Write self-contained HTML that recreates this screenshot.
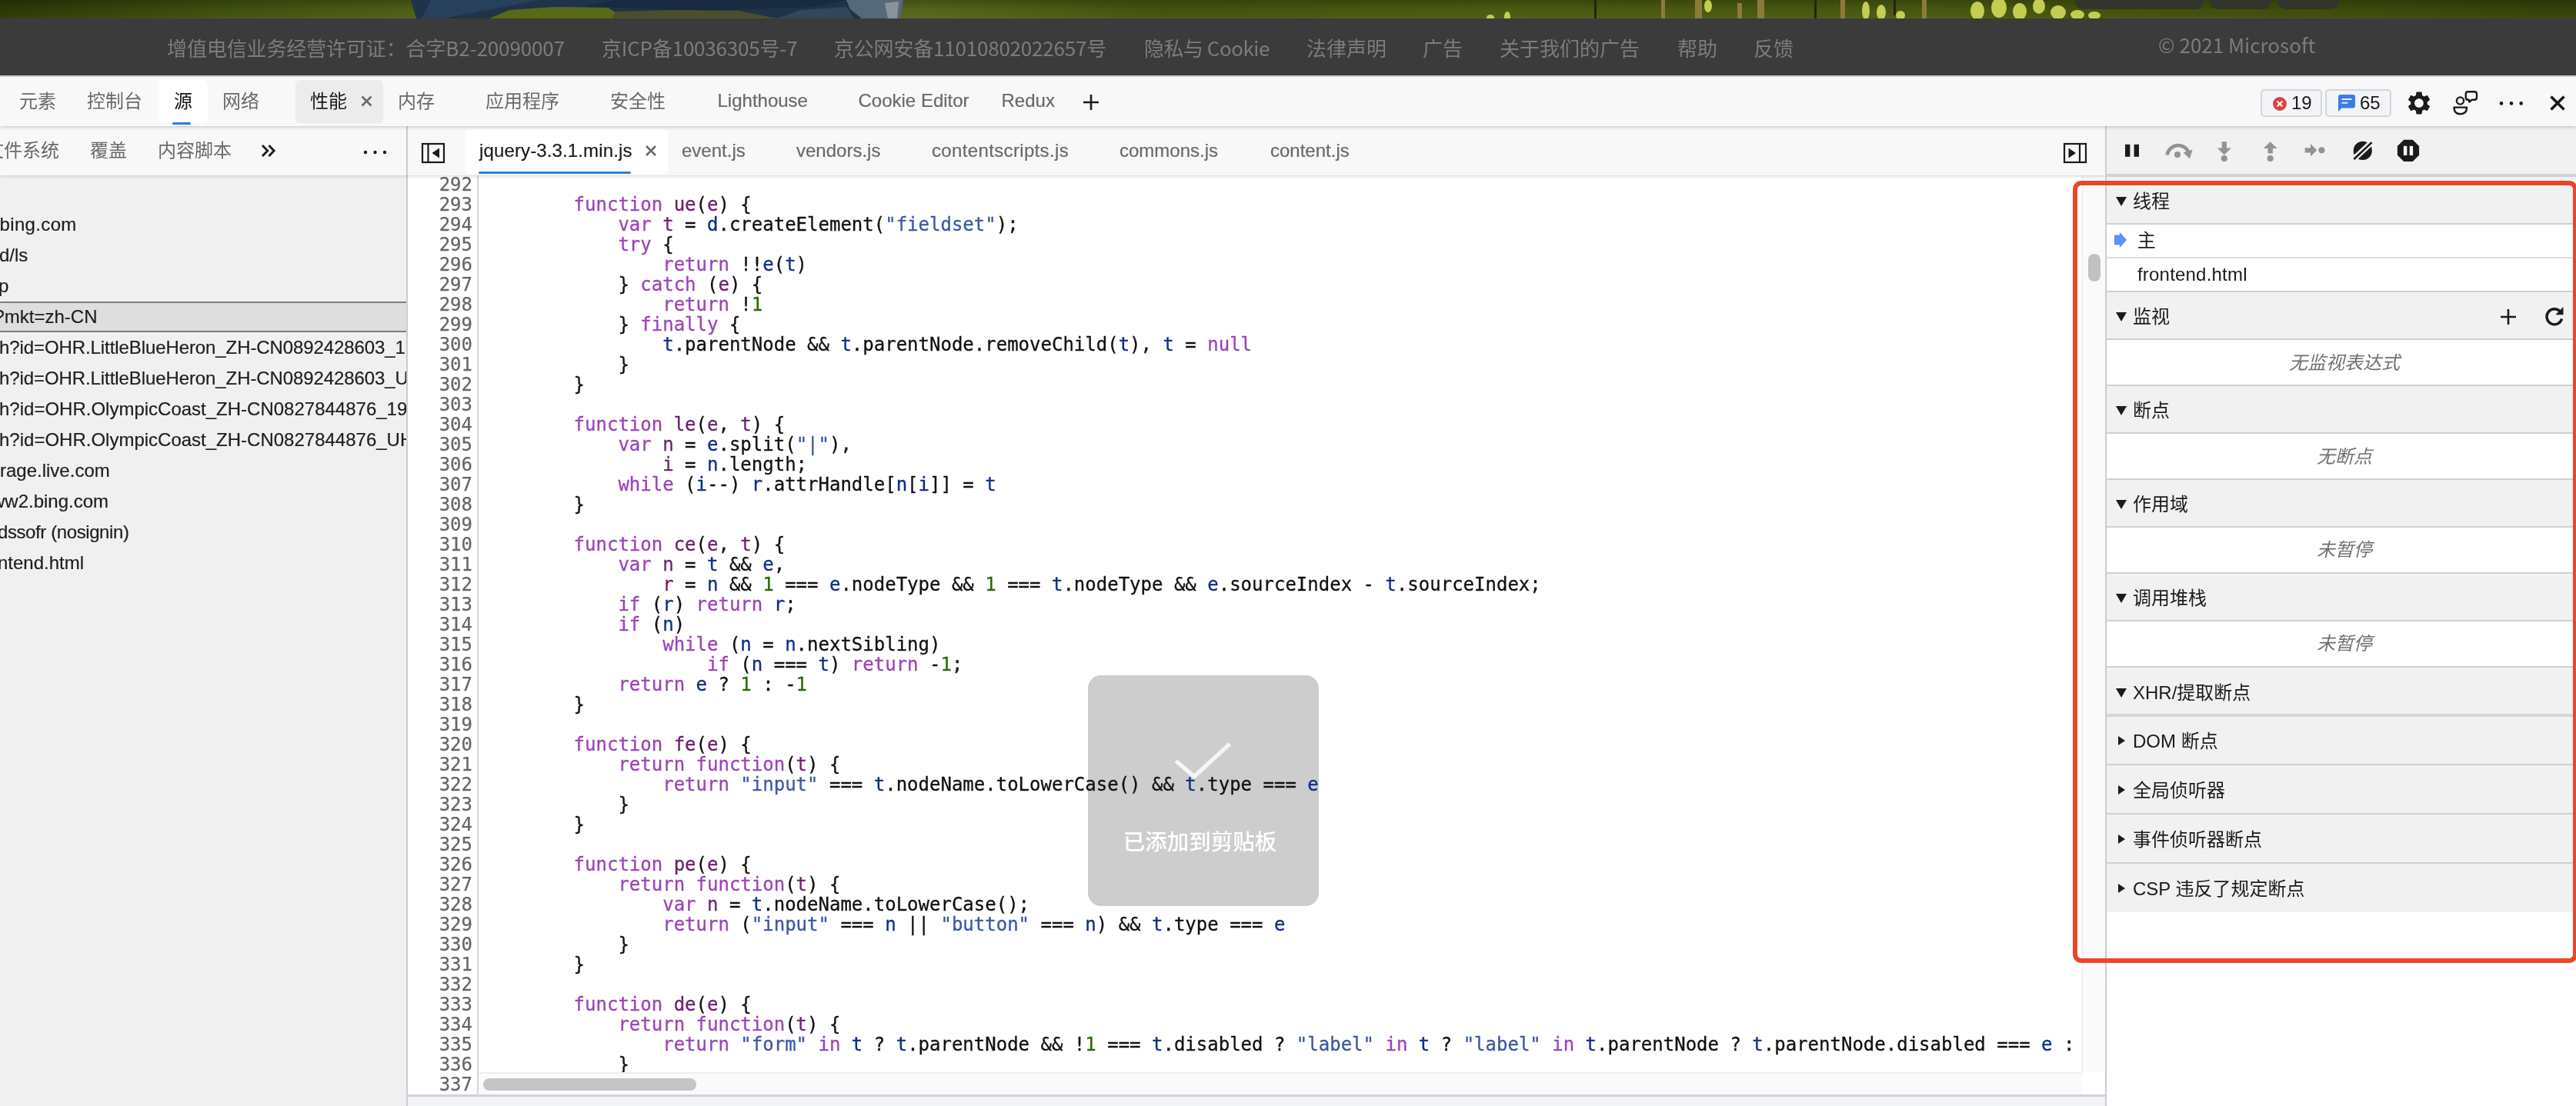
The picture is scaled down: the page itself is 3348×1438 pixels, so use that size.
<!DOCTYPE html>
<html lang="zh-CN">
<head>
<meta charset="utf-8">
<title>DevTools - 源</title>
<style>
*{box-sizing:border-box;margin:0;padding:0}
html,body{width:3348px;height:1438px;overflow:hidden;background:#fff}
body{position:relative;font-family:"Liberation Sans","Noto Sans CJK SC",sans-serif;font-size:24px;color:#1b1b1b}
#root{position:absolute;left:0;top:0;width:3348px;height:1438px;will-change:transform}
.abs{position:absolute}
.t{position:absolute;white-space:nowrap}
i{font-style:normal}

/* page behind devtools */
#strip{left:0;top:0;width:3348px;height:24px;overflow:hidden}
#footer{left:0;top:24px;width:3348px;height:74px;background:#3b3b3b;font-family:"Noto Sans CJK SC","Liberation Sans",sans-serif;font-size:26px;color:#7c7c7c}
#footer .t{top:0;line-height:76px}
#dtborder{left:0;top:98px;width:3348px;height:2px;background:#d3d6dc}

/* main toolbar */
#maintabs{left:0;top:100px;width:3348px;height:64px;background:#f8f8f8;box-shadow:0 1px 5px rgba(0,0,0,.22);z-index:5}
#maintabs .t{top:0;line-height:64px;color:#6a6a6a}
#maintabs .l,#row2 .l{line-height:62px;-webkit-text-stroke:.2px}
#tab-src{left:206px;top:4px;width:64px;height:56px;background:#fff;border-radius:6px}
#tab-src-ul{left:224px;top:59px;width:24px;height:3px;background:#2f7de1;border-radius:2px}
#tab-perf{left:384px;top:4px;width:114px;height:56px;background:#ececec;border-radius:6px}
.badge{top:16px;height:36px;border:2px solid #d3d6dd;border-radius:5px;background:#f3f4f7}

/* second row */
#row2{left:0;top:164px;width:3348px;height:64px;z-index:4}
#row2bg{left:0;top:0;width:2736px;height:64px;background:#f8f8f8;box-shadow:0 1px 4px rgba(0,0,0,.18)}
#row2 .t{top:0;line-height:64px;color:#6a6a6a}
#filetab{left:604px;top:4px;width:264px;height:58px;background:#fff;border-radius:6px}
#filetab-ul{left:622px;top:59px;width:198px;height:3px;background:#2f7de1;border-radius:2px}
#dbgbar{left:2738px;top:0;width:610px;height:66px;background:#f1f1f1;border-bottom:4px solid #cfd2d9}
.vdiv{width:2px;background:#c9ccd3}

/* left navigator */
#nav{left:0;top:228px;width:528px;height:1210px;background:#f0f0f0;overflow:hidden}
#nav .t{line-height:40px;color:#1e1e1e;margin-top:-1px;-webkit-text-stroke:.2px}
#navsel{left:0;top:164px;width:529px;height:40px;background:#dedede;border-top:2px solid #7d7d7d;border-bottom:2px solid #7d7d7d}

/* editor */
#editor{left:530px;top:228px;width:2176px;height:1195px;background:#fff;overflow:hidden}
#gutter{-webkit-text-stroke:.25px;left:0;top:-1.3px;width:92px;height:1200px;border-right:2px solid #d5d8dd;background:#fff;font-family:"DejaVu Sans Mono","Liberation Mono",monospace;font-size:24px;color:#666;text-align:right;padding-right:6px}
.gl,.cl{height:26px;line-height:26px;white-space:pre}
#code{left:100px;top:-1.3px;-webkit-text-stroke:.3px;font-family:"DejaVu Sans Mono","Liberation Mono",monospace;font-size:24px;color:#111;z-index:3}
.k{color:#9b45b8}.d{color:#6d1f6e}.v{color:#0e2e87}.s{color:#3c58a5}.n{color:#2b6a06}
#toast{left:884px;top:650px;width:300px;height:300px;border-radius:17px;background:#cdcdcd;z-index:2}
#toast-t{left:879.6px;top:841.5px;width:300px;text-align:center;font-family:"Noto Sans CJK SC",sans-serif;font-size:28.5px;font-weight:500;line-height:46px;color:#fff;z-index:4}
#hscroll{left:92px;top:1166px;width:2084px;height:29px;background:#fafafa;border-top:2px solid #eee;z-index:6}
#hthumb{left:6px;top:6px;width:277px;height:16px;border-radius:8px;background:#c5c5c5}
#vscroll{left:2706px;top:228px;width:31px;height:1166px;background:#fafafa;border-left:1px solid #e8e8e8}
#vthumb{left:7px;top:102px;width:16px;height:36px;border-radius:8px;background:#c1c1c1}
#edbottom{left:530px;top:1423px;width:2207px;height:15px;background:#f3f4f6;border-top:3px solid #d0d3da}

/* right debugger sidebar */
#side{left:2738px;top:230px;width:610px;height:1208px;background:#fff;overflow:hidden}
.srow{position:absolute;left:0;width:610px;overflow:hidden}
.tri-d{position:absolute;left:12px;width:0;height:0;border-left:7.5px solid transparent;border-right:7.5px solid transparent;border-top:12px solid #1b1b1b}
.tri-r{position:absolute;left:15px;width:0;height:0;border-top:6.5px solid transparent;border-bottom:6.5px solid transparent;border-left:9.5px solid #1b1b1b}
.empty{position:absolute;left:0;width:618px;text-align:center;font-style:italic;color:#707070;margin-top:-.8px}
#redbox{left:2694px;top:235px;width:656px;height:1017px;border:6px solid #ec4628;border-radius:11px;z-index:20}
</style>
</head>
<body>
<div id="root">

<!-- background page strip (bird photo) -->
<div id="strip" class="abs">
<svg width="3348" height="24" viewBox="0 0 3348 24">
<defs>
<linearGradient id="g1" x1="0" x2="1"><stop offset="0" stop-color="#2c3907"/><stop offset=".09" stop-color="#41520f"/><stop offset=".16" stop-color="#4e6016"/><stop offset=".36" stop-color="#55671a"/><stop offset=".45" stop-color="#44540d"/><stop offset=".58" stop-color="#4c5c11"/><stop offset=".75" stop-color="#495910"/><stop offset=".9" stop-color="#3f4e0c"/><stop offset="1" stop-color="#35430a"/></linearGradient>
<linearGradient id="g2" x1="0" y1="0" x2="0" y2="1"><stop offset="0" stop-color="#000" stop-opacity=".22"/><stop offset=".6" stop-color="#000" stop-opacity="0"/><stop offset="1" stop-color="#fff" stop-opacity=".04"/></linearGradient>
</defs>
<rect width="3348" height="24" fill="url(#g1)"/>
<rect width="3348" height="24" fill="url(#g2)"/>
<polygon points="534,0 1174,0 1170,24 541,24" fill="#1f3349"/>
<polygon points="560,0 700,0 640,12 575,24 548,24" fill="#27405c"/>
<polygon points="800,0 1100,0 1060,9 900,14 760,8" fill="#182a3d"/>
<polygon points="636,24 662,13 720,9 790,10 800,16 796,24" fill="#566a18"/>
<polygon points="796,24 800,15 880,13 960,14 1010,24" fill="#4a4f2b"/>
<polygon points="1010,24 1040,13 1100,9 1110,24" fill="#33475a"/>
<polygon points="1100,0 1174,0 1170,24 1120,24 1105,12" fill="#56697a"/>
<polygon points="1150,4 1168,2 1166,24 1154,24" fill="#8a9399"/>
<g fill="#8d7a3a"><rect x="2159" y="0" width="5" height="24"/><rect x="2203" y="0" width="9" height="24"/><rect x="2258" y="4" width="6" height="20"/><rect x="2284" y="0" width="9" height="24"/><rect x="2392" y="0" width="6" height="24"/><rect x="2498" y="0" width="6" height="24"/></g>
<g fill="#23260c"><rect x="2072" y="0" width="3" height="24"/><rect x="2358" y="0" width="3" height="24"/><rect x="2461" y="0" width="3" height="20"/></g>
<g fill="#c3cd52"><ellipse cx="1937" cy="23" rx="5" ry="4"/><ellipse cx="1959" cy="22" rx="4" ry="7"/><ellipse cx="2220" cy="8" rx="5" ry="8"/><ellipse cx="2425" cy="14" rx="5" ry="12"/><ellipse cx="2445" cy="16" rx="6" ry="10"/><ellipse cx="2470" cy="20" rx="6" ry="6"/>
<ellipse cx="2570" cy="14" rx="9" ry="12"/><ellipse cx="2598" cy="10" rx="10" ry="13"/><ellipse cx="2625" cy="15" rx="9" ry="11"/><ellipse cx="2650" cy="8" rx="8" ry="10"/><ellipse cx="2675" cy="16" rx="10" ry="9"/><ellipse cx="2700" cy="19" rx="9" ry="6"/><ellipse cx="2722" cy="20" rx="8" ry="5"/></g>
<rect x="2697" y="-12" width="167" height="24" rx="10" fill="#33342b"/>
<rect x="2872" y="-12" width="80" height="24" rx="10" fill="#33342b"/>
<rect x="2960" y="-12" width="80" height="24" rx="10" fill="#33342b"/>
</svg>
</div>
<div id="footer" class="abs">
<span class="t" style="left:217px;letter-spacing:-.12px">增值电信业务经营许可证：合字B2-20090007</span>
<span class="t" style="left:782px;letter-spacing:-.2px">京ICP备10036305号-7</span>
<span class="t" style="left:1084px;letter-spacing:-.2px">京公网安备11010802022657号</span>
<span class="t" style="left:1487px;letter-spacing:-.5px">隐私与 Cookie</span>
<span class="t" style="left:1698px">法律声明</span>
<span class="t" style="left:1849px">广告</span>
<span class="t" style="left:1949px">关于我们的广告</span>
<span class="t" style="left:2180px">帮助</span>
<span class="t" style="left:2279px">反馈</span>
<span class="t" style="left:2805px;line-height:68px">© 2021 Microsoft</span>
</div>
<div id="dtborder" class="abs"></div>

<!-- DevTools main tab bar -->
<div id="maintabs" class="abs">
<div id="tab-src" class="abs"></div><div id="tab-src-ul" class="abs"></div>
<div id="tab-perf" class="abs"></div>
<span class="t" style="left:25px">元素</span>
<span class="t" style="left:113px">控制台</span>
<span class="t" style="left:226px;color:#111">源</span>
<span class="t" style="left:289px">网络</span>
<span class="t" style="left:403px;color:#1b1b1b">性能</span>
<svg class="abs" style="left:469px;top:24px" width="15" height="15" viewBox="0 0 15 15"><path d="M1.5 1.5 L13.5 13.5 M13.5 1.5 L1.5 13.5" stroke="#6a6a6a" stroke-width="2.6" fill="none"/></svg>
<span class="t" style="left:517px">内存</span>
<span class="t" style="left:631px">应用程序</span>
<span class="t" style="left:793px">安全性</span>
<span class="t l" style="left:932.5px">Lighthouse</span>
<span class="t l" style="left:1115.5px">Cookie Editor</span>
<span class="t l" style="left:1301.5px">Redux</span>
<svg class="abs" style="left:1407px;top:22px" width="22" height="22" viewBox="0 0 22 22"><path d="M11 1 V21 M1 11 H21" stroke="#1b1b1b" stroke-width="2.6" fill="none"/></svg>

<div class="abs badge" style="left:2938px;width:80px"></div>
<svg class="abs" style="left:2954px;top:26px" width="18" height="18" viewBox="0 0 18 18"><circle cx="9" cy="9" r="9" fill="#d9444c"/><path d="M5.6 5.6 L12.4 12.4 M12.4 5.6 L5.6 12.4" stroke="#fff" stroke-width="2" fill="none"/></svg>
<span class="t" style="left:2978px;color:#1b1b1b;line-height:68px">19</span>
<div class="abs badge" style="left:3022px;width:86px"></div>
<svg class="abs" style="left:3039px;top:23px" width="22" height="22" viewBox="0 0 22 22"><path d="M3 0 H19 Q22 0 22 3 V14.5 Q22 17.5 19 17.5 H4.5 L0 22 V3 Q0 0 3 0 Z" fill="#3b7de2"/><path d="M4.5 6 H17.5 M4.5 10.8 H12.5" stroke="#dfeafc" stroke-width="2" fill="none"/></svg>
<span class="t" style="left:3067px;color:#1b1b1b;line-height:68px">65</span>
<!-- gear -->
<svg class="abs" style="left:3126px;top:16.2px" width="36" height="36" viewBox="0 0 24 24"><path fill="#1b1b1b" d="M19.14,12.94c0.04-0.3,0.06-0.61,0.06-0.94c0-0.32-0.02-0.64-0.07-0.94l2.03-1.58c0.18-0.14,0.23-0.41,0.12-0.61 l-1.92-3.32c-0.12-0.22-0.37-0.29-0.59-0.22l-2.39,0.96c-0.5-0.38-1.03-0.7-1.62-0.94L14.4,2.81c-0.04-0.24-0.24-0.41-0.48-0.41 h-3.84c-0.24,0-0.43,0.17-0.47,0.41L9.25,5.35C8.66,5.59,8.12,5.92,7.63,6.29L5.24,5.33c-0.22-0.08-0.47,0-0.59,0.22L2.74,8.87 C2.62,9.08,2.66,9.34,2.86,9.48l2.03,1.58C4.84,11.36,4.8,11.69,4.8,12s0.02,0.64,0.07,0.94l-2.03,1.58 c-0.18,0.14-0.23,0.41-0.12,0.61l1.92,3.32c0.12,0.22,0.37,0.29,0.59,0.22l2.39-0.96c0.5,0.38,1.03,0.7,1.62,0.94l0.36,2.54 c0.05,0.24,0.24,0.41,0.48,0.41h3.84c0.24,0,0.44-0.17,0.47-0.41l0.36-2.54c0.59-0.24,1.13-0.56,1.62-0.94l2.39,0.96 c0.22,0.08,0.47,0,0.59-0.22l1.92-3.32c0.12-0.22,0.07-0.47-0.12-0.61L19.14,12.94z M12,15.9c-2.15,0-3.9-1.75-3.9-3.9 s1.75-3.9,3.9-3.9s3.9,1.75,3.9,3.9S14.15,15.9,12,15.9z"/></svg>
<!-- feedback -->
<svg class="abs" style="left:3186px;top:16px" width="36" height="36" viewBox="0 0 36 36" fill="none" stroke="#1b1b1b" stroke-width="2.4" stroke-linejoin="round"><circle cx="11.5" cy="15" r="4.6"/><path d="M3.5 23.6 H20.1 Q20.1 32.3 11.8 32.3 Q3.5 32.3 3.5 23.6 Z"/><path d="M21.5 3.2 H30 Q33 3.2 33 6.2 V10.8 Q33 13.8 30 13.8 H26.5 L23.5 16.6 L22.8 13.8 H21.5 Q18.8 13.8 18.8 10.8 V6.2 Q18.8 3.2 21.5 3.2 Z"/></svg>
<svg class="abs" style="left:3246px;top:30px" width="36" height="10" viewBox="0 0 36 10"><circle cx="5" cy="4.4" r="2.3" fill="#1b1b1b"/><circle cx="18" cy="4.4" r="2.3" fill="#1b1b1b"/><circle cx="30.7" cy="4.4" r="2.3" fill="#1b1b1b"/></svg>
<svg class="abs" style="left:3313px;top:23px" width="22" height="22" viewBox="0 0 22 22"><path d="M2.5 2.5 L19.5 19.5 M19.5 2.5 L2.5 19.5" stroke="#1b1b1b" stroke-width="3.6" fill="none"/></svg>
</div>

<!-- second row: navigator tabs / file tabs / debugger toolbar -->
<div id="row2" class="abs">
<div id="row2bg" class="abs"></div>
<span class="t" style="left:-19px">文件系统</span>
<span class="t" style="left:117px">覆盖</span>
<span class="t" style="left:205px">内容脚本</span>
<svg class="abs" style="left:339px;top:23px" width="22" height="20" viewBox="0 0 22 20"><path d="M2 2 L8.8 9 L2 16 M10.4 2 L17.2 9 L10.4 16" stroke="#1b1b1b" stroke-width="2.8" fill="none"/></svg>
<svg class="abs" style="left:470px;top:29px" width="36" height="10" viewBox="0 0 36 10"><circle cx="5" cy="5" r="2.2" fill="#1b1b1b"/><circle cx="17.5" cy="5" r="2.2" fill="#1b1b1b"/><circle cx="30" cy="5" r="2.2" fill="#1b1b1b"/></svg>
<div class="abs vdiv" style="left:528px;top:0;height:64px"></div>
<svg class="abs" style="left:547px;top:21px" width="32" height="28" viewBox="0 0 32 28"><rect x="2" y="2" width="28" height="24" fill="none" stroke="#1b1b1b" stroke-width="2.2"/><path d="M9.5 2 V26" stroke="#1b1b1b" stroke-width="2.2"/><path d="M24 7.5 V20.5 L14.5 14 Z" fill="#1b1b1b"/></svg>
<div id="filetab" class="abs"></div><div id="filetab-ul" class="abs"></div>
<span class="t l" style="left:623px;color:#1b1b1b;letter-spacing:.13px">jquery-3.3.1.min.js</span>
<svg class="abs" style="left:838px;top:24px" width="16" height="16" viewBox="0 0 16 16"><path d="M2 2 L14 14 M14 2 L2 14" stroke="#6a6a6a" stroke-width="2.6" fill="none"/></svg>
<span class="t l" style="left:886px">event.js</span>
<span class="t l" style="left:1035px">vendors.js</span>
<span class="t l" style="left:1211px;letter-spacing:.35px">contentscripts.js</span>
<span class="t l" style="left:1455px">commons.js</span>
<span class="t l" style="left:1651px">content.js</span>
<svg class="abs" style="left:2681px;top:21px" width="32" height="28" viewBox="0 0 32 28"><rect x="2" y="2" width="28" height="24" fill="none" stroke="#1b1b1b" stroke-width="2.2"/><path d="M22 2 V26" stroke="#1b1b1b" stroke-width="2.2"/><path d="M7.5 7.5 V20.5 L17 14 Z" fill="#1b1b1b"/></svg>
<div class="abs vdiv" style="left:2736px;top:0;height:64px"></div>
<div id="dbgbar" class="abs">
<!-- coordinates relative to x=2738,y=164 -->
<svg class="abs" style="left:0;top:0" width="610" height="62" viewBox="2738 164 610 62">
<rect x="2762" y="187.8" width="6.4" height="16" fill="#1b1b1b"/><rect x="2773.6" y="187.8" width="6.4" height="16" fill="#1b1b1b"/>
<g fill="#939393">
<path d="M2816.6 201.5 A14.5 14.5 0 0 1 2844.2 197.6" fill="none" stroke="#939393" stroke-width="4.6"/>
<path d="M2837.5 198.5 L2849.6 194.5 L2846 206.5 Z"/>
<circle cx="2830" cy="201" r="4.1"/>
<path d="M2887.7 184.2 H2894 V192.5 H2899.8 L2890.8 201.4 L2881.8 192.5 H2887.7 Z"/><circle cx="2890.8" cy="206" r="4.1"/>
<path d="M2950.7 184.2 L2959.7 193 H2953.9 V199.4 H2947.5 V193 H2941.7 Z"/><circle cx="2950.7" cy="206" r="4.1"/>
<path d="M2995.7 192.2 H3003 V187 L3011.3 195.3 L3003 203.6 V198.4 H2995.7 Z"/><circle cx="3017.4" cy="195.3" r="4.1"/>
</g>
<circle cx="3070.8" cy="195.9" r="12.1" fill="#1b1b1b"/>
<path d="M3059.3 206.7 L3082.3 185.1" stroke="#f1f1f1" stroke-width="7.4"/>
<path d="M3059.3 207 L3082.6 185.1" stroke="#1b1b1b" stroke-width="2.6"/>
<path d="M3124.2 181.8 H3135.8 L3144.1 190.1 V201.7 L3135.8 210 H3124.2 L3115.9 201.7 V190.1 Z" fill="#1b1b1b"/>
<rect x="3123.9" y="189.8" width="4.4" height="12.2" fill="#fff"/><rect x="3131.7" y="189.8" width="4.4" height="12.2" fill="#fff"/>
</svg>
</div>
</div>

<!-- left navigator tree -->
<div id="nav" class="abs">
<div id="navsel" class="abs"></div>
<span class="t" style="left:-.5px;top:45px;letter-spacing:.35px">bing.com</span>
<span class="t" style="left:-1px;top:85px">d/ls</span>
<span class="t" style="left:-2px;top:125px">p</span>
<span class="t" style="left:-7.5px;top:165px">?mkt=zh-CN</span>
<span class="t" style="left:-1px;top:205px;letter-spacing:-.09px">h?id=OHR.LittleBlueHeron_ZH-CN0892428603_1920x1080.jpg</span>
<span class="t" style="left:-1px;top:245px;letter-spacing:-.09px">h?id=OHR.LittleBlueHeron_ZH-CN0892428603_UHD.jpg</span>
<span class="t" style="left:-1px;top:285px">h?id=OHR.OlympicCoast_ZH-CN0827844876_1920x1080.jpg</span>
<span class="t" style="left:-1px;top:325px">h?id=OHR.OlympicCoast_ZH-CN0827844876_UHD.jpg</span>
<span class="t" style="left:0px;top:365px">rage.live.com</span>
<span class="t" style="left:-11px;top:405px">ww2.bing.com</span>
<span class="t" style="left:-8px;top:445px;letter-spacing:-.4px">idssofr (nosignin)</span>
<span class="t" style="left:-3px;top:485px">ntend.html</span>
</div>
<div class="abs vdiv" style="left:528px;top:228px;height:1210px"></div>

<!-- source editor -->
<div id="editor" class="abs">
<div id="gutter" class="abs">
<div class="gl">292</div>
<div class="gl">293</div>
<div class="gl">294</div>
<div class="gl">295</div>
<div class="gl">296</div>
<div class="gl">297</div>
<div class="gl">298</div>
<div class="gl">299</div>
<div class="gl">300</div>
<div class="gl">301</div>
<div class="gl">302</div>
<div class="gl">303</div>
<div class="gl">304</div>
<div class="gl">305</div>
<div class="gl">306</div>
<div class="gl">307</div>
<div class="gl">308</div>
<div class="gl">309</div>
<div class="gl">310</div>
<div class="gl">311</div>
<div class="gl">312</div>
<div class="gl">313</div>
<div class="gl">314</div>
<div class="gl">315</div>
<div class="gl">316</div>
<div class="gl">317</div>
<div class="gl">318</div>
<div class="gl">319</div>
<div class="gl">320</div>
<div class="gl">321</div>
<div class="gl">322</div>
<div class="gl">323</div>
<div class="gl">324</div>
<div class="gl">325</div>
<div class="gl">326</div>
<div class="gl">327</div>
<div class="gl">328</div>
<div class="gl">329</div>
<div class="gl">330</div>
<div class="gl">331</div>
<div class="gl">332</div>
<div class="gl">333</div>
<div class="gl">334</div>
<div class="gl">335</div>
<div class="gl">336</div>
<div class="gl">337</div>
</div>
<div id="toast" class="abs"></div>
<div id="code" class="abs">
<div class="cl">&nbsp;</div>
<div class="cl">        <i class="k">function</i> <i class="d">ue</i>(<i class="d">e</i>) {</div>
<div class="cl">            <i class="k">var</i> <i class="d">t</i> = <i class="v">d</i>.createElement(<i class="s">"fieldset"</i>);</div>
<div class="cl">            <i class="k">try</i> {</div>
<div class="cl">                <i class="k">return</i> !!<i class="v">e</i>(<i class="v">t</i>)</div>
<div class="cl">            } <i class="k">catch</i> (<i class="d">e</i>) {</div>
<div class="cl">                <i class="k">return</i> !<i class="n">1</i></div>
<div class="cl">            } <i class="k">finally</i> {</div>
<div class="cl">                <i class="v">t</i>.parentNode &amp;&amp; <i class="v">t</i>.parentNode.removeChild(<i class="v">t</i>), <i class="v">t</i> = <i class="k">null</i></div>
<div class="cl">            }</div>
<div class="cl">        }</div>
<div class="cl">&nbsp;</div>
<div class="cl">        <i class="k">function</i> <i class="d">le</i>(<i class="d">e</i>, <i class="d">t</i>) {</div>
<div class="cl">            <i class="k">var</i> <i class="d">n</i> = <i class="v">e</i>.split(<i class="s">"|"</i>),</div>
<div class="cl">                <i class="d">i</i> = <i class="v">n</i>.length;</div>
<div class="cl">            <i class="k">while</i> (<i class="v">i</i>--) <i class="v">r</i>.attrHandle[<i class="v">n</i>[<i class="v">i</i>]] = <i class="v">t</i></div>
<div class="cl">        }</div>
<div class="cl">&nbsp;</div>
<div class="cl">        <i class="k">function</i> <i class="d">ce</i>(<i class="d">e</i>, <i class="d">t</i>) {</div>
<div class="cl">            <i class="k">var</i> <i class="d">n</i> = <i class="v">t</i> &amp;&amp; <i class="v">e</i>,</div>
<div class="cl">                <i class="d">r</i> = <i class="v">n</i> &amp;&amp; <i class="n">1</i> === <i class="v">e</i>.nodeType &amp;&amp; <i class="n">1</i> === <i class="v">t</i>.nodeType &amp;&amp; <i class="v">e</i>.sourceIndex - <i class="v">t</i>.sourceIndex;</div>
<div class="cl">            <i class="k">if</i> (<i class="v">r</i>) <i class="k">return</i> <i class="v">r</i>;</div>
<div class="cl">            <i class="k">if</i> (<i class="v">n</i>)</div>
<div class="cl">                <i class="k">while</i> (<i class="v">n</i> = <i class="v">n</i>.nextSibling)</div>
<div class="cl">                    <i class="k">if</i> (<i class="v">n</i> === <i class="v">t</i>) <i class="k">return</i> -<i class="n">1</i>;</div>
<div class="cl">            <i class="k">return</i> <i class="v">e</i> ? <i class="n">1</i> : -<i class="n">1</i></div>
<div class="cl">        }</div>
<div class="cl">&nbsp;</div>
<div class="cl">        <i class="k">function</i> <i class="d">fe</i>(<i class="d">e</i>) {</div>
<div class="cl">            <i class="k">return</i> <i class="k">function</i>(<i class="d">t</i>) {</div>
<div class="cl">                <i class="k">return</i> <i class="s">"input"</i> === <i class="v">t</i>.nodeName.toLowerCase() &amp;&amp; <i class="v">t</i>.type === <i class="v">e</i></div>
<div class="cl">            }</div>
<div class="cl">        }</div>
<div class="cl">&nbsp;</div>
<div class="cl">        <i class="k">function</i> <i class="d">pe</i>(<i class="d">e</i>) {</div>
<div class="cl">            <i class="k">return</i> <i class="k">function</i>(<i class="d">t</i>) {</div>
<div class="cl">                <i class="k">var</i> <i class="d">n</i> = <i class="v">t</i>.nodeName.toLowerCase();</div>
<div class="cl">                <i class="k">return</i> (<i class="s">"input"</i> === <i class="v">n</i> || <i class="s">"button"</i> === <i class="v">n</i>) &amp;&amp; <i class="v">t</i>.type === <i class="v">e</i></div>
<div class="cl">            }</div>
<div class="cl">        }</div>
<div class="cl">&nbsp;</div>
<div class="cl">        <i class="k">function</i> <i class="d">de</i>(<i class="d">e</i>) {</div>
<div class="cl">            <i class="k">return</i> <i class="k">function</i>(<i class="d">t</i>) {</div>
<div class="cl">                <i class="k">return</i> <i class="s">"form"</i> <i class="k">in</i> <i class="v">t</i> ? <i class="v">t</i>.parentNode &amp;&amp; !<i class="n">1</i> === <i class="v">t</i>.disabled ? <i class="s">"label"</i> <i class="k">in</i> <i class="v">t</i> ? <i class="s">"label"</i> <i class="k">in</i> <i class="v">t</i>.parentNode ? <i class="v">t</i>.parentNode.disabled === <i class="v">e</i> : <i class="v">t</i>.disabled === <i class="v">e</i> : <i class="v">t</i>.isDisabled === <i class="v">e</i> || <i class="v">t</i>.isDisabled !== !<i class="v">e</i> &amp;&amp; <i class="v">ie</i>(<i class="v">t</i>) === <i class="v">e</i></div>
<div class="cl">            }</div>
<div class="cl">&nbsp;</div>
</div>
<svg class="abs" style="left:984px;top:726.3px;z-index:4" width="100" height="70" viewBox="1514 953 100 70"><path d="M1528.3 988.2 L1552 1008.6 L1598.4 966.3" stroke="#f5f5f5" stroke-width="5.4" fill="none"/></svg>
<div id="toast-t" class="abs">已添加到剪贴板</div>
<div id="hscroll" class="abs"><div id="hthumb" class="abs"></div></div>
</div>
<div id="vscroll" class="abs"><div id="vthumb" class="abs"></div></div>
<div id="edbottom" class="abs"></div>
<div class="abs vdiv" style="left:2736px;top:228px;height:1210px;z-index:7"></div>

<!-- debugger sidebar -->
<div id="side" class="abs">
<div class="srow" style="top:0px;height:62px;background:#f1f1f1;border-bottom:2px solid #cdd0d7"><div class="tri-d" style="top:26.0px"></div><span class="t" style="left:34px;top:2.2px;line-height:60px">线程</span></div>
<div class="srow" style="top:62px;height:44px;background:#fff;border-bottom:2px solid #dcdee3"><svg class="abs" style="left:10px;top:10.3px" width="17" height="20" viewBox="0 0 17 20"><path d="M0 3.6 H7 V0 L16.2 10 L7 20 V16.4 H0 Z" fill="#5b93f0"/></svg><span class="t" style="left:39.7px;top:-9.0px;line-height:60px">主</span></div>
<div class="srow" style="top:106px;height:44px;background:#fff;border-bottom:2px solid #cdd0d7"><span class="t" style="left:40px;top:-9.3px;line-height:60px;letter-spacing:.2px">frontend.html</span></div>
<div class="srow" style="top:150px;height:62px;background:#f1f1f1;border-bottom:2px solid #cdd0d7"><div class="tri-d" style="top:25.7px"></div><span class="t" style="left:34px;top:1.9px;line-height:60px">监视</span><svg class="abs" style="left:512px;top:21.5px" width="20" height="20" viewBox="0 0 20 20"><path d="M10 0 V20 M0 10 H20" stroke="#1b1b1b" stroke-width="2.6" fill="none"/></svg><svg class="abs" style="left:568px;top:16.7px" width="28" height="28" viewBox="0 0 28 28"><path d="M21.5 8.2 A10 10 0 1 0 23.6 17.5" stroke="#1b1b1b" stroke-width="3.4" fill="none"/><path d="M25.5 2 V12.2 H15.3 Z" fill="#1b1b1b"/></svg></div>
<div class="srow" style="top:212px;height:60px;background:#fff;border-bottom:2px solid #cdd0d7"><span class="empty" style="top:0.5px;line-height:60px">无监视表达式</span></div>
<div class="srow" style="top:272px;height:62px;background:#f1f1f1;border-bottom:2px solid #cdd0d7"><div class="tri-d" style="top:25.5px"></div><span class="t" style="left:34px;top:1.7px;line-height:60px">断点</span></div>
<div class="srow" style="top:334px;height:60px;background:#fff;border-bottom:2px solid #cdd0d7"><span class="empty" style="top:0.7px;line-height:60px">无断点</span></div>
<div class="srow" style="top:394px;height:62px;background:#f1f1f1;border-bottom:2px solid #cdd0d7"><div class="tri-d" style="top:26.2px"></div><span class="t" style="left:34px;top:2.4px;line-height:60px">作用域</span></div>
<div class="srow" style="top:456px;height:60px;background:#fff;border-bottom:2px solid #cdd0d7"><span class="empty" style="top:-0.3px;line-height:60px">未暂停</span></div>
<div class="srow" style="top:516px;height:62px;background:#f1f1f1;border-bottom:2px solid #cdd0d7"><div class="tri-d" style="top:26.1px"></div><span class="t" style="left:34px;top:2.3px;line-height:60px">调用堆栈</span></div>
<div class="srow" style="top:578px;height:60px;background:#fff;border-bottom:2px solid #cdd0d7"><span class="empty" style="top:0.1px;line-height:60px">未暂停</span></div>
<div class="srow" style="top:638px;height:64px;background:#f1f1f1;border-bottom:4px solid #d3d6dc"><div class="tri-d" style="top:26.5px"></div><span class="t" style="left:34px;top:2.7px;line-height:60px">XHR/提取断点</span></div>
<div class="srow" style="top:702px;height:63px;background:#f1f1f1;border-bottom:2px solid #cdd0d7"><div class="tri-r" style="top:24.8px"></div><span class="t" style="left:34px;top:1.7px;line-height:60px">DOM 断点</span></div>
<div class="srow" style="top:765px;height:64px;background:#f1f1f1;border-bottom:2px solid #cdd0d7"><div class="tri-r" style="top:26.2px"></div><span class="t" style="left:34px;top:3.1px;line-height:60px">全局侦听器</span></div>
<div class="srow" style="top:829px;height:64px;background:#f1f1f1;border-bottom:2px solid #cdd0d7"><div class="tri-r" style="top:25.8px"></div><span class="t" style="left:34px;top:2.7px;line-height:60px">事件侦听器断点</span></div>
<div class="srow" style="top:893px;height:63px;background:#f1f1f1;border-bottom:0px solid #cdd0d7"><div class="tri-r" style="top:25.8px"></div><span class="t" style="left:34px;top:2.7px;line-height:60px">CSP 违反了规定断点</span></div>
</div>

<!-- red annotation rectangle -->
<div id="redbox" class="abs"></div>

</div>
</body>
</html>
